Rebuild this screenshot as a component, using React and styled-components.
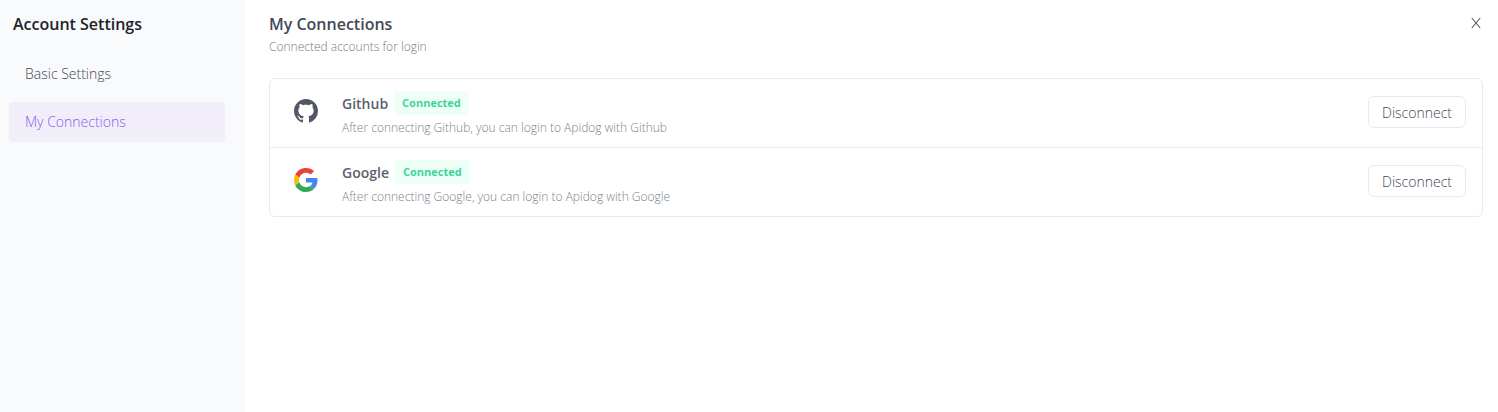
import React from 'react'
import styled, { createGlobalStyle } from 'styled-components'

const connections = [
    { name: 'Github', icon: <GithubIcon /> },
    { name: 'Google', icon: <GoogleIcon /> },
]

function App() {
    return (
        <>
            <GlobalStyle />
            <Container>
                <Sidebar>
                    <SidebarTitle>Account Settings</SidebarTitle>
                    <Menu>
                        <MenuLink href="#basic">Basic Settings</MenuLink>
                        <MenuLink href="#connections" $active aria-current="page">My Connections</MenuLink>
                    </Menu>
                </Sidebar>
                <Content>
                    <Header>
                        <div>
                            <Title>My Connections</Title>
                            <Subtitle>Connected accounts for login</Subtitle>
                        </div>
                        <CloseButton type="button" aria-label="Close">
                            <CloseIcon />
                        </CloseButton>
                    </Header>
                    <List>
                        {connections.map(({ name, icon }) => (
                            <Row key={name}>
                                {icon}
                                <Info>
                                    <NameLine>
                                        <Name>{name}</Name>
                                        <Badge>Connected</Badge>
                                    </NameLine>
                                    <Description>
                                        After connecting {name}, you can login to Apidog with {name}
                                    </Description>
                                </Info>
                                <Button type="button">Disconnect</Button>
                            </Row>
                        ))}
                    </List>
                </Content>
            </Container>
        </>
    )
}

function CloseIcon() {
    return (
        <svg width="14" height="14" viewBox="0 0 14 14" fill="none" stroke="currentColor" strokeWidth="1.1" aria-hidden="true">
            <path d="M2.8 2l8.4 10M11.2 2L2.8 12" />
        </svg>
    )
}

function GithubIcon() {
    return (
        <svg width="24" height="24" viewBox="0 0 16 16" fill="#525766" aria-hidden="true">
            <path fillRule="evenodd" d="M8 0C3.58 0 0 3.58 0 8c0 3.54 2.29 6.53 5.47 7.59.4.07.55-.17.55-.38 0-.19-.01-.82-.01-1.49-2.01.37-2.53-.49-2.69-.94-.09-.23-.48-.94-.82-1.13-.28-.15-.68-.52-.01-.53.63-.01 1.08.58 1.23.82.72 1.21 1.87.87 2.33.66.07-.52.28-.87.51-1.07-1.78-.2-3.64-.89-3.64-3.95 0-.87.31-1.59.82-2.15-.08-.2-.36-1.02.08-2.12 0 0 .67-.21 2.2.82.64-.18 1.32-.27 2-.27s1.36.09 2 .27c1.53-1.04 2.2-.82 2.2-.82.44 1.1.16 1.92.08 2.12.51.56.82 1.27.82 2.15 0 3.07-1.87 3.75-3.65 3.95.29.25.54.73.54 1.48 0 1.07-.01 1.93-.01 2.2 0 .21.15.46.55.38A8.01 8.01 0 0 0 16 8c0-4.42-3.58-8-8-8z" />
        </svg>
    )
}

function GoogleIcon() {
    return (
        <svg width="24" height="24" viewBox="0 0 48 48" aria-hidden="true">
            <path fill="#EA4335" d="M24 9.5c3.54 0 6.71 1.22 9.21 3.6l6.85-6.85C35.9 2.38 30.47 0 24 0 14.62 0 6.51 5.38 2.56 13.22l7.98 6.19C12.43 13.72 17.74 9.5 24 9.5z" />
            <path fill="#4285F4" d="M46.98 24.55c0-1.57-.15-3.09-.38-4.55H24v9.02h12.94c-.58 2.96-2.26 5.48-4.78 7.18l7.73 6c4.51-4.18 7.09-10.36 7.09-17.65z" />
            <path fill="#FBBC05" d="M10.53 28.59c-.48-1.45-.76-2.99-.76-4.59s.27-3.14.76-4.59l-7.98-6.19C.92 16.46 0 20.12 0 24c0 3.88.92 7.54 2.56 10.78l7.97-6.19z" />
            <path fill="#34A853" d="M24 48c6.48 0 11.93-2.13 15.89-5.81l-7.73-6c-2.15 1.45-4.92 2.3-8.16 2.3-6.26 0-11.57-4.22-13.47-9.91l-7.98 6.19C6.51 42.62 14.62 48 24 48z" />
        </svg>
    )
}

export default App


const GlobalStyle = createGlobalStyle`
    *{
        box-sizing: border-box;
    }
    body{
        margin: 0;
        background: #ffffff;
        color: #525766;
        font-family: "Open Sans", "Noto Sans", sans-serif;
        font-size: 14px;
        font-weight: 300;
    }
`

const Container = styled.div`
    display: flex;
    min-height: 100vh;
`

const Sidebar = styled.aside`
    flex: 0 0 245px;
    padding: 12px 20px 12px 9px;
    background: #f9fafc;
`

const SidebarTitle = styled.h2`
    margin: 0;
    padding: 0 4px;
    font-size: 16px;
    font-weight: 600;
    line-height: 24px;
    color: #202329;
`

const Menu = styled.nav`
    display: flex;
    flex-direction: column;
    gap: 8px;
    margin-top: 18px;
`

const MenuLink = styled.a`
    padding: 0 16px;
    border-radius: 4px;
    line-height: 40px;
    text-decoration: none;
    color: ${props => props.$active ? '#8660ee' : '#434857'};
    background: ${props => props.$active ? '#f1eefa' : 'transparent'};
`

const Content = styled.main`
    flex: 1;
    min-width: 0;
    padding: 12px 15px 24px 24px;
`

const Header = styled.header`
    display: flex;
    align-items: flex-start;
    justify-content: space-between;
`

const Title = styled.h1`
    margin: 0;
    font-size: 16px;
    font-weight: 600;
    line-height: 24px;
    color: #434857;
`

const Subtitle = styled.p`
    margin: 0;
    font-size: 12px;
    line-height: 22px;
    color: #777b87;
`

const CloseButton = styled.button`
    display: flex;
    padding: 4px 0;
    border: 0;
    background: transparent;
    color: #525766;
    cursor: pointer;
`

const List = styled.ul`
    margin: 20px 0 0;
    padding: 0;
    border: 1px solid #e9eaee;
    border-radius: 6px;
    list-style: none;
`

const Row = styled.li`
    display: flex;
    align-items: flex-start;
    padding: 12px 16px 6px 24px;
    & + &{
        border-top: 1px solid #e9eaee;
    }
    > svg{
        flex: none;
        margin-top: 8px;
    }
`

const Info = styled.div`
    flex: 1;
    min-width: 0;
    margin-left: 24px;
`

const NameLine = styled.div`
    display: flex;
    align-items: center;
    gap: 6px;
`

const Name = styled.span`
    font-weight: 600;
    color: #5c606f;
`

const Badge = styled.span`
    padding: 0 8px;
    border-radius: 4px;
    background: #eefff8;
    font-size: 11px;
    font-weight: 700;
    line-height: 24px;
    color: #3dd598;
`

const Description = styled.p`
    margin: 0;
    font-size: 12px;
    line-height: 26px;
    color: #7d818c;
`

const Button = styled.button`
    height: 32px;
    margin-top: 5px;
    padding: 0 13px;
    border: 1px solid #e9eaee;
    border-radius: 6px;
    background: #ffffff;
    font-family: inherit;
    font-size: 14px;
    font-weight: 300;
    color: #434857;
    cursor: pointer;
`
